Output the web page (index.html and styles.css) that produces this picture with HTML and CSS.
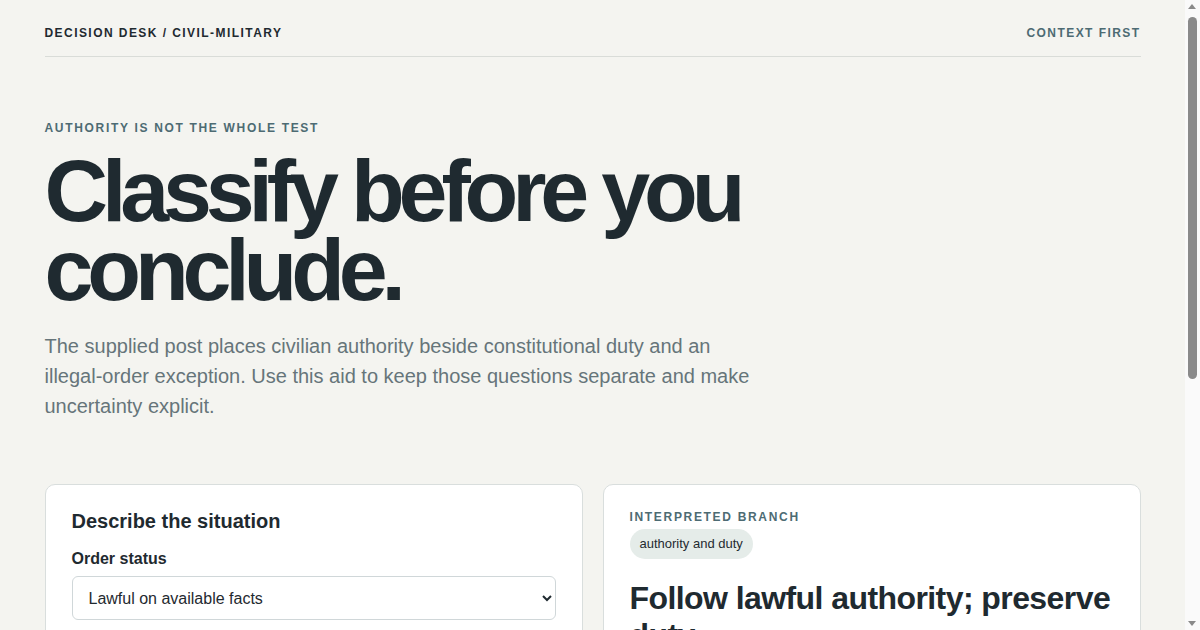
FILE: index.html
```html
<!DOCTYPE html>
<html lang="en">
<head>
    <meta charset="UTF-8">
    <meta name="viewport" content="width=device-width, initial-scale=1.0">
    <title>Decision Desk - Civil-Military</title>
    <link rel="stylesheet" href="styles.css">
</head>
<body>
    <div class="page">
        <header class="topbar">
            <div class="brand">Decision Desk / Civil-Military</div>
            <div class="topbar-note">Context first</div>
        </header>

        <section class="hero">
            <div class="eyebrow">Authority is not the whole test</div>
            <h1>Classify before you conclude.</h1>
            <p class="lede">The supplied post places civilian authority beside constitutional duty and an illegal-order exception. Use this aid to keep those questions separate and make uncertainty explicit.</p>
        </section>

        <main class="panels">
            <form class="card" id="situationForm">
                <h3>Describe the situation</h3>

                <div class="field">
                    <label for="orderStatus">Order status</label>
                    <select id="orderStatus">
                        <option value="lawful">Lawful on available facts</option>
                        <option value="unclear">Legality unclear</option>
                        <option value="illegal">Manifestly illegal</option>
                    </select>
                </div>

                <div class="field">
                    <label for="source">Source of the order</label>
                    <select id="source">
                        <option value="civilian">Civilian chain of command</option>
                        <option value="military">Military superior</option>
                        <option value="unknown">Unknown or contested</option>
                    </select>
                </div>

                <div class="field">
                    <label for="duty">Constitutional duty at stake</label>
                    <select id="duty">
                        <option value="none">None identified</option>
                        <option value="rights">Protection of rights</option>
                        <option value="oath">Oath to the constitution</option>
                    </select>
                </div>
            </form>

            <section class="card result">
                <div class="eyebrow small">Interpreted branch</div>
                <span class="pill" id="branchPill">authority and duty</span>
                <h2 id="branchTitle">Follow lawful authority; preserve duty.</h2>
                <p class="result-text" id="branchText">On the facts given, the order appears lawful and comes through the civilian chain. Comply, while recording the constitutional duty that applies and any facts that would change the picture.</p>
                <ul class="checks">
                    <li>Confirm the order's source and scope.</li>
                    <li>Note which duty is engaged and why.</li>
                </ul>
            </section>
        </main>

        <footer class="footer">
            This aid sorts questions. It does not give legal advice.
        </footer>
    </div>

    <!-- stand-in for the browser scrollbar -->
    <div class="scrollbar" aria-hidden="true">
        <span class="arrow up"></span>
        <span class="thumb"></span>
        <span class="arrow down"></span>
    </div>

    <script>
        const branches = {
            lawful: {
                pill: 'authority and duty',
                title: 'Follow lawful authority; preserve duty.',
                text: 'On the facts given, the order appears lawful and comes through the civilian chain. Comply, while recording the constitutional duty that applies and any facts that would change the picture.'
            },
            unclear: {
                pill: 'uncertain legality',
                title: 'Pause and seek clarification.',
                text: 'The legality of the order is not settled on the available facts. Ask for clarification through proper channels and record what you know.'
            },
            illegal: {
                pill: 'illegal-order exception',
                title: 'Do not carry out a manifestly illegal order.',
                text: 'Authority does not extend to manifestly illegal orders. Refuse, report through proper channels, and document the situation.'
            }
        };

        const status = document.getElementById('orderStatus');

        status.addEventListener('change', function () {
            const b = branches[status.value];
            document.getElementById('branchPill').textContent = b.pill;
            document.getElementById('branchTitle').textContent = b.title;
            document.getElementById('branchText').textContent = b.text;
        });
    </script>
</body>
</html>
```

FILE: styles.css
```css
* {
    margin: 0;
    padding: 0;
    box-sizing: border-box;
}

body {
    font-family: "Liberation Sans", Arial, sans-serif;
    background: #f4f4f0;
    color: #1f2a30;
    padding-right: 15px;
}

.page {
    max-width: 1096px;
    margin: 0 auto;
}

.topbar {
    display: flex;
    justify-content: space-between;
    align-items: center;
    padding: 26px 0 16px;
    border-bottom: 1px solid #d9dcd8;
    font-size: 12px;
    font-weight: bold;
    letter-spacing: 0.12em;
    text-transform: uppercase;
    line-height: 14px;
}

.topbar-note {
    color: #4d6b73;
}

.hero {
    padding: 64px 0 63px;
}

.eyebrow {
    font-size: 12px;
    line-height: 14px;
    font-weight: bold;
    letter-spacing: 0.14em;
    text-transform: uppercase;
    color: #4d6b73;
    margin-bottom: 16px;
}

h1 {
    font-size: 88px;
    line-height: 0.9;
    letter-spacing: -0.07em;
    max-width: 760px;
    margin-bottom: 22px;
}

.lede {
    font-size: 20px;
    line-height: 30px;
    color: #66757a;
    max-width: 720px;
}

.panels {
    display: grid;
    grid-template-columns: 1fr 1fr;
    gap: 20px;
    align-items: start;
}

.card {
    background: white;
    border: 1px solid #d9dedd;
    border-radius: 10px;
    padding: 24px 26px 28px;
}

h3 {
    font-size: 20px;
    line-height: 24px;
    margin-bottom: 16px;
}

.field {
    margin-bottom: 18px;
}

label {
    display: block;
    font-size: 16px;
    font-weight: bold;
    line-height: 19px;
    margin-bottom: 8px;
}

select {
    width: 100%;
    height: 44px;
    padding: 0 12px;
    font-family: "Liberation Sans", Arial, sans-serif;
    font-size: 16px;
    color: #1f2a30;
    background: white;
    border: 1px solid #d0d7d9;
    border-radius: 6px;
}

.eyebrow.small {
    margin-top: 1px;
    margin-bottom: 5px;
}

.pill {
    display: inline-block;
    background: #e5ece9;
    border-radius: 15px;
    padding: 0 10px;
    font-size: 13px;
    line-height: 30px;
}

h2 {
    font-size: 32px;
    line-height: 37px;
    letter-spacing: -0.018em;
    margin: 21px 0 16px;
}

.result-text {
    font-size: 17px;
    line-height: 27px;
    color: #55666c;
    margin-bottom: 18px;
}

.checks {
    list-style: none;
    border-top: 1px solid #e3e7e5;
}

    .checks li {
        padding: 12px 0;
        border-bottom: 1px solid #e3e7e5;
        font-size: 15px;
    }

.footer {
    padding: 32px 0 40px;
    font-size: 13px;
    color: #66757a;
}

/* Scrollbar stand-in */
.scrollbar {
    position: fixed;
    top: 0;
    right: 0;
    bottom: 0;
    width: 15px;
    background: #fafafa;
}

    .scrollbar .thumb {
        position: absolute;
        top: 17px;
        left: 3px;
        width: 9px;
        height: 362px;
        background: #8a8a8a;
        border-radius: 5px;
    }

    .scrollbar .arrow {
        position: absolute;
        left: 3px;
        width: 0;
        height: 0;
        border-left: 4.5px solid transparent;
        border-right: 4.5px solid transparent;
    }

    .scrollbar .up {
        top: 4px;
        border-bottom: 5px solid #8a8a8a;
    }

    .scrollbar .down {
        bottom: 4px;
        border-top: 5px solid #8a8a8a;
    }
```
